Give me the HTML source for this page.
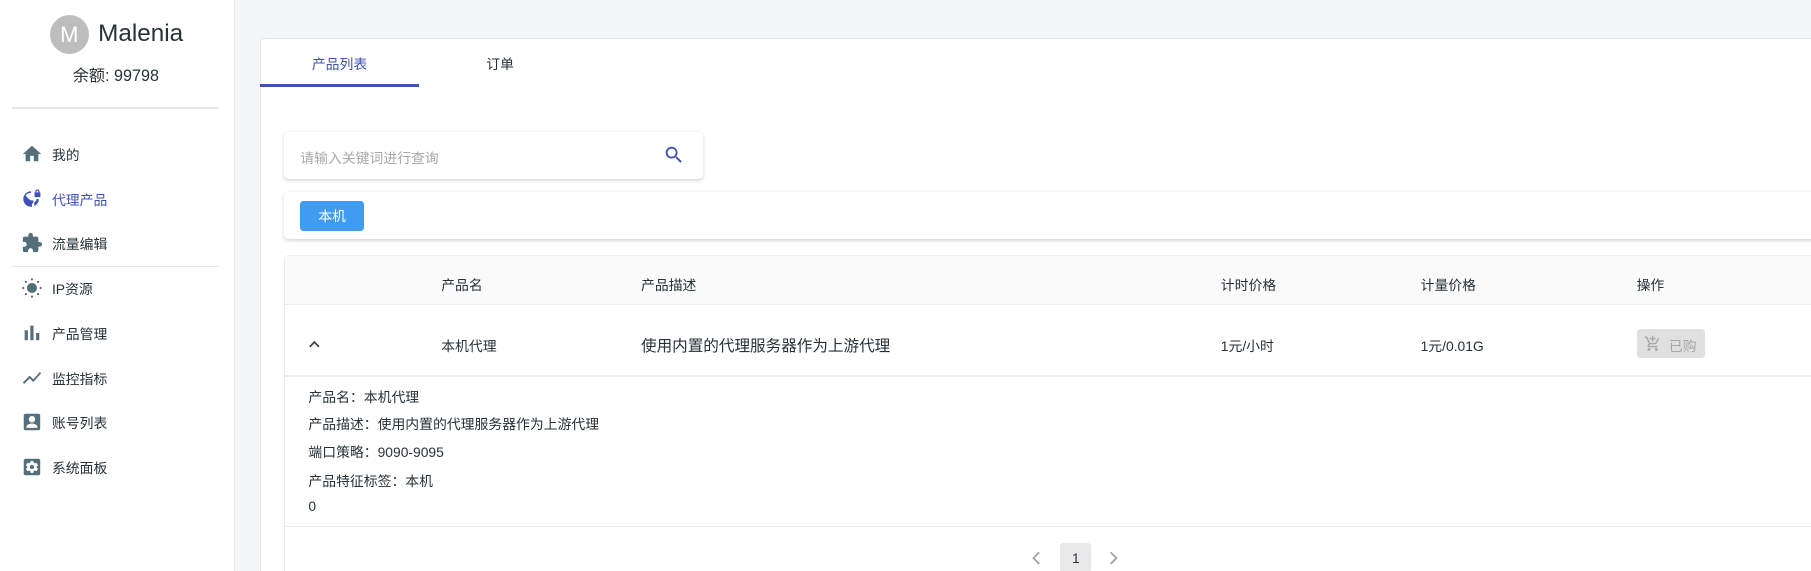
<!DOCTYPE html>
<html><head><meta charset="utf-8"><style>
html,body{margin:0;padding:0;overflow:hidden}
body{width:1568px;height:494px;zoom:1.15497;background:#f4f5f7;font-family:"Liberation Sans","Noto Sans CJK SC",sans-serif;color:#263238;position:relative;font-size:12px}
.a{position:absolute}
.side{left:0;top:0;width:203px;height:494px;background:#fff;border-right:1px solid #e8e8e8}
.av{left:43px;top:13px;width:34px;height:34px;border-radius:50%;background:#bdbdbd;color:#fff;font-size:19px;text-align:center;line-height:34px}
.mi{left:18px;height:20px;display:flex;align-items:center;font-size:12px;color:#263238}
.mi svg{width:19px;height:19px;margin-right:8px;fill:#546e7a}
.card{left:225px;top:33px;width:1400px;height:480px;background:#fff;border:1px solid #e6e6e6;border-radius:4px}
.t{white-space:nowrap}
</style></head><body>
<div class="a side"></div>
<div class="a av">M</div>
<div class="a t" style="left:85px;top:17px;font-size:21px">Malenia</div>
<div class="a t" style="left:63px;top:54px;font-size:14px">余额: 99798</div>
<div class="a" style="left:10px;top:93px;width:180px;height:1px;background:#e6e6e6"></div>
<div class="a" style="left:10px;top:230px;width:180px;height:1px;background:#e6e6e6"></div>

<div class="a mi" style="top:123px"><svg viewBox="0 0 24 24"><path d="M10 20v-6h4v6h5v-8h3L12 3 2 12h3v8z"/></svg>我的</div>
<div class="a mi" style="top:162px;color:#3f51b5"><svg viewBox="0 0 24 24" style="fill:#3f51b5"><path d="M11 3.5a8.5 8.5 0 1 0 8.5 8.5h-2.6v1.5l-2.4 2.4V20a6.6 6.6 0 0 1-2.5.5v-3l1.5-1.5v-2.5h-3L8 11.5 5 8.5A6.6 6.6 0 0 1 11 5.4zM18 1.5a2.3 2.3 0 0 0-2.3 2.3v1h-.9v5.2h6.4V4.8h-.9v-1A2.3 2.3 0 0 0 18 1.5zm0 1.3a1 1 0 0 1 1 1v1h-2v-1a1 1 0 0 1 1-1z"/></svg>代理产品</div>
<div class="a mi" style="top:200px"><svg viewBox="0 0 24 24"><path d="M20.5 11H19V7a2 2 0 0 0-2-2h-4V3.5a2.5 2.5 0 0 0-5 0V5H4a2 2 0 0 0-2 2v3.8h1.5a2.7 2.7 0 0 1 0 5.4H2V20a2 2 0 0 0 2 2h3.8v-1.5a2.7 2.7 0 0 1 5.4 0V22H17a2 2 0 0 0 2-2v-4h1.5a2.5 2.5 0 0 0 0-5z"/></svg>流量编辑</div>
<div class="a mi" style="top:239px"><svg viewBox="0 0 24 24"><circle cx="12" cy="12" r="5.5"/><circle cx="12" cy="2.5" r="1.2"/><circle cx="12" cy="21.5" r="1.2"/><circle cx="2.5" cy="12" r="1.2"/><circle cx="21.5" cy="12" r="1.2"/><circle cx="5.3" cy="5.3" r="1.2"/><circle cx="18.7" cy="18.7" r="1.2"/><circle cx="5.3" cy="18.7" r="1.2"/><circle cx="18.7" cy="5.3" r="1.2"/></svg>IP资源</div>
<div class="a mi" style="top:278px"><svg viewBox="0 0 24 24"><path d="M4 9h3.5v11H4zM10.2 4h3.5v16h-3.5zM16.5 12h3.5v8h-3.5z"/></svg>产品管理</div>
<div class="a mi" style="top:317px"><svg viewBox="0 0 24 24"><path d="M3.5 18.5 9.5 12.5l4 4L22 6.9 20.6 5.5l-7.1 8-4-4L2 16.99z"/></svg>监控指标</div>
<div class="a mi" style="top:355px"><svg viewBox="0 0 24 24"><path d="M3 5v14a2 2 0 0 0 2 2h14a2 2 0 0 0 2-2V5a2 2 0 0 0-2-2H5a2 2 0 0 0-2 2zm12.5 4a3.5 3.5 0 1 1-7 0 3.5 3.5 0 0 1 7 0zM6 17c0-2 4-3.3 6-3.3s6 1.3 6 3.3v1.5H6z"/></svg>账号列表</div>
<div class="a mi" style="top:394px"><svg viewBox="0 0 24 24"><path d="M5 3a2 2 0 0 0-2 2v14a2 2 0 0 0 2 2h14a2 2 0 0 0 2-2V5a2 2 0 0 0-2-2zm5.5 2.5h3l.4 1.9 1.3.7 1.9-.6 1.5 2.6-1.5 1.3v1.2l1.5 1.3-1.5 2.6-1.9-.6-1.3.7-.4 1.9h-3l-.4-1.9-1.3-.7-1.9.6-1.5-2.6 1.5-1.3v-1.2L5.4 10.1 6.9 7.5l1.9.6 1.3-.7zM12 9.8a2.2 2.2 0 1 0 0 4.4 2.2 2.2 0 0 0 0-4.4z"/></svg>系统面板</div>

<div class="a card"></div>
<div class="a t" style="left:270px;top:46px;color:#3f51b5">产品列表</div>
<div class="a t" style="left:421px;top:46px">订单</div>
<div class="a" style="left:225px;top:73px;width:138px;height:2px;background:#3f51b5"></div>

<div class="a" style="left:246px;top:114px;width:363px;height:41px;background:#fff;border-radius:4px;box-shadow:0 1px 3px rgba(0,0,0,.18)"></div>
<div class="a t" style="left:260px;top:127px;color:#a8a8a8">请输入关键词进行查询</div>
<svg class="a" style="left:574px;top:125px" width="19" height="19" viewBox="0 0 24 24"><path fill="#3f51b5" d="M15.5 14h-.8l-.3-.3A6.5 6.5 0 1 0 9.5 16a6.5 6.5 0 0 0 4.2-1.6l.3.3v.8l5 5 1.5-1.5zm-6 0A4.5 4.5 0 1 1 14 9.5 4.5 4.5 0 0 1 9.5 14z"/></svg>

<div class="a" style="left:246px;top:166px;width:1330px;height:41px;background:#fff;border-radius:4px;box-shadow:0 1px 3px rgba(0,0,0,.18)"></div>
<div class="a t" style="left:260px;top:174px;width:55px;height:26px;background:#3f9cf0;border-radius:3px;color:#fff;text-align:center;line-height:26px">本机</div>

<div class="a" style="left:246px;top:221px;width:1330px;height:280px;background:#fff;border:1px solid #ececec;border-radius:4px"></div>
<div class="a" style="left:247px;top:222px;width:1330px;height:41px;background:#fafafa;border-bottom:1px solid #ececec"></div>
<div class="a t" style="left:382px;top:237px">产品名</div>
<div class="a t" style="left:555px;top:237px">产品描述</div>
<div class="a t" style="left:1057px;top:237px">计时价格</div>
<div class="a t" style="left:1230px;top:237px">计量价格</div>
<div class="a t" style="left:1417px;top:237px">操作</div>

<svg class="a" style="left:263px;top:289px" width="18" height="18" viewBox="0 0 24 24"><path fill="#37474f" d="M7.4 15.4 12 10.8l4.6 4.6L18 14l-6-6-6 6z"/></svg>
<div class="a t" style="left:382px;top:290px">本机代理</div>
<div class="a t" style="left:555px;top:289px;font-size:13.5px">使用内置的代理服务器作为上游代理</div>
<div class="a t" style="left:1057px;top:290px">1元/小时</div>
<div class="a t" style="left:1230px;top:290px">1元/0.01G</div>
<div class="a" style="left:1417px;top:285px;width:59px;height:25px;background:#e0e0e0;border-radius:3px"></div>
<svg class="a" style="left:1423px;top:290px" width="15" height="15" viewBox="0 0 24 24"><path fill="#a6a6a6" d="M11 9h2V6h3V4h-3V1h-2v3H8v2h3zm-4 9a2 2 0 1 0 0 4 2 2 0 0 0 0-4zm10 0a2 2 0 1 0 0 4 2 2 0 0 0 0-4zM7.2 14.8l.9-1.8h7.5a2 2 0 0 0 1.7-1l3.9-7-1.7-1-3.9 7H8.5L4.3 2H1v2h2l3.6 7.6-1.4 2.4A2 2 0 0 0 7 17h12v-2H7.4z"/></svg>
<div class="a t" style="left:1445px;top:290px;color:#a6a6a6">已购</div>
<div class="a" style="left:247px;top:325px;width:1330px;height:1px;background:#ececec"></div>

<div class="a t" style="left:267px;top:334px">产品名：本机代理</div>
<div class="a t" style="left:267px;top:358px">产品描述：使用内置的代理服务器作为上游代理</div>
<div class="a t" style="left:267px;top:382px">端口策略：9090-9095</div>
<div class="a t" style="left:267px;top:407px">产品特征标签：本机</div>
<div class="a t" style="left:267px;top:431px">0</div>
<div class="a" style="left:247px;top:455px;width:1330px;height:1px;background:#ececec"></div>

<svg class="a" style="left:892px;top:476px" width="12" height="14" viewBox="0 0 12 14"><path d="M8 2 3 7l5 5" fill="none" stroke="#9e9e9e" stroke-width="1.5"/></svg>
<div class="a" style="left:918px;top:470px;width:27px;height:26px;background:#e8e8e8;border-radius:3px;text-align:center;line-height:26px;font-size:12px">1</div>
<svg class="a" style="left:958px;top:476px" width="12" height="14" viewBox="0 0 12 14"><path d="M4 2l5 5-5 5" fill="none" stroke="#9e9e9e" stroke-width="1.5"/></svg>
</body></html>
